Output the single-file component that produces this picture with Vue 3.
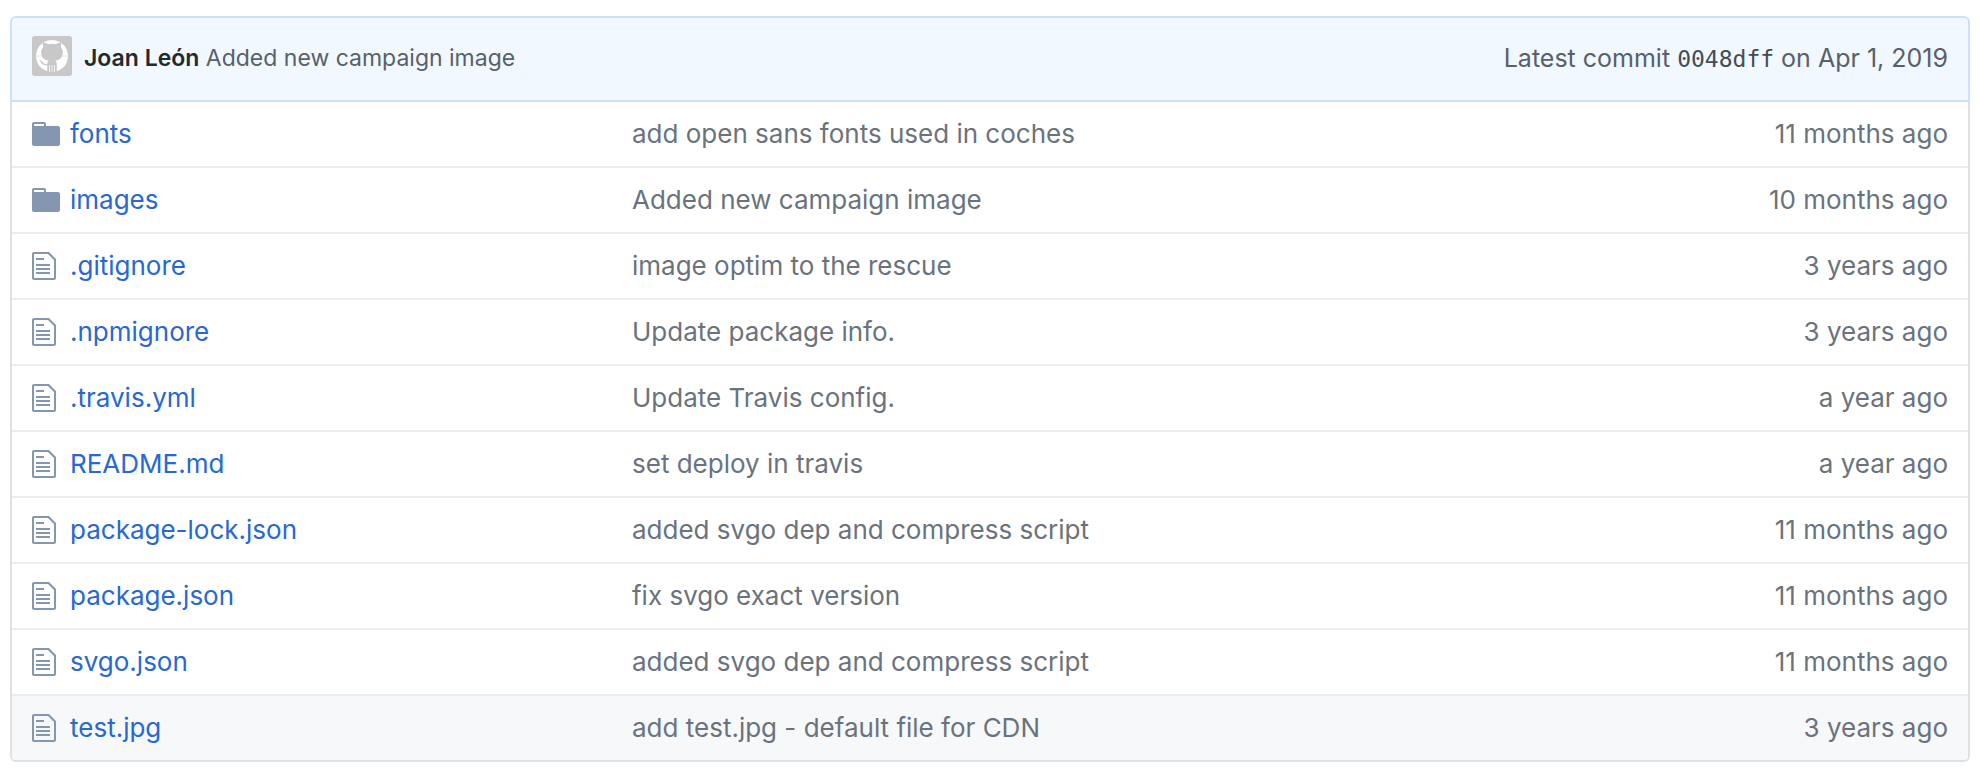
<script setup>
const files = [
  { type: 'dir', name: 'fonts', message: 'add open sans fonts used in coches', age: '11 months ago' },
  { type: 'dir', name: 'images', message: 'Added new campaign image', age: '10 months ago' },
  { type: 'file', name: '.gitignore', message: 'image optim to the rescue', age: '3 years ago' },
  { type: 'file', name: '.npmignore', message: 'Update package info.', age: '3 years ago' },
  { type: 'file', name: '.travis.yml', message: 'Update Travis config.', age: 'a year ago' },
  { type: 'file', name: 'README.md', message: 'set deploy in travis', age: 'a year ago' },
  { type: 'file', name: 'package-lock.json', message: 'added svgo dep and compress script', age: '11 months ago' },
  { type: 'file', name: 'package.json', message: 'fix svgo exact version', age: '11 months ago' },
  { type: 'file', name: 'svgo.json', message: 'added svgo dep and compress script', age: '11 months ago' },
  { type: 'file', name: 'test.jpg', message: 'add test.jpg - default file for CDN', age: '3 years ago', active: true },
]
</script>

<template>
  <main class="browser">
    <header class="commit">
      <svg class="avatar" viewBox="0 0 40 40" aria-hidden="true">
        <rect width="40" height="40" rx="3" fill="#c8c8c8" />
        <circle cx="20" cy="20" r="16" fill="#fff" />
        <g fill="#c8c8c8">
          <path d="M11.2 11c-.6-1.600-.5-3.500 0-4.600 1.900 0 3.600 1 5 1.900a15 15 0 0 1 7.600 0c1.400-.9 3.100-1.900 5-1.900.5 1.100.6 3 0 4.600 1.400 1.500 2 3.200 2 5.200 0 5.800-3.400 7.700-7.600 8.200 1.100 1 1.600 2.100 1.600 3.800V36.500h-9.600V28.200c0-1.700.5-2.800 1.600-3.800-4.200-.5-7.600-2.400-7.600-8.200 0-2 .6-3.700 2-5.200z" />
          <path d="M15.500 29.200c-3.400.6-5.300-.4-6.400-2.600-.6-1.200-1.200-1.800-2.100-2.400 2.200-.3 3.400 1.300 4.300 2.600 1 1.300 2.500 1.400 4.200.9z" />
        </g>
        <path stroke="#fff" stroke-width="1" opacity=".75" d="M17.500 29v7M20 29v7M22.500 29v7" />
        <path stroke="#c8c8c8" stroke-width="1" opacity=".5" fill="none" d="M4 20h6M30 20h6" />
      </svg>
      <p class="summary"><a class="author" href="#">Joan León</a> <a class="title" href="#">Added new campaign image</a></p>
      <p class="latest">Latest commit <a class="sha" href="#">0048dff</a> on <time datetime="2019-04-01">Apr 1, 2019</time></p>
    </header>
    <table class="files">
      <tbody>
        <tr v-for="file in files" :key="file.name" :class="{ active: file.active }">
          <td class="icon">
            <svg v-if="file.type === 'dir'" width="28" height="32" viewBox="0 0 14 16" aria-hidden="true">
              <path d="M13 4H7V3c0-.66-.31-1-1-1H1c-.55 0-1 .45-1 1v10c0 .55.45 1 1 1h12c.55 0 1-.45 1-1V5c0-.55-.45-1-1-1zM6 4H1V3h5v1z" />
            </svg>
            <svg v-else width="24" height="32" viewBox="0 0 12 16" aria-hidden="true">
              <path d="M6 5H2V4h4v1zM2 8h7V7H2v1zm0 2h7V9H2v1zm0 2h7v-1H2v1zm10-7.5V14c0 .55-.45 1-1 1H1c-.55 0-1-.45-1-1V2c0-.55.45-1 1-1h7.5L12 4.500zM11 5L8 2H1v12h10V5z" />
            </svg>
          </td>
          <td class="name"><a href="#">{{ file.name }}</a></td>
          <td class="message"><a href="#">{{ file.message }}</a></td>
          <td class="age"><time>{{ file.age }}</time></td>
        </tr>
      </tbody>
    </table>
  </main>
</template>

<style>
body {
  margin: 0;
  background: #fff;
}
</style>

<style scoped>
.browser {
  margin: 16px 10px 14px;
  font-family: Inter, "Liberation Sans", sans-serif;
  font-size: 26px;
  line-height: 32px;
  color: #6a737d;
}

a {
  color: inherit;
  text-decoration: none;
}

a:hover {
  text-decoration: underline;
}

.commit {
  display: flex;
  align-items: flex-start;
  padding: 18px 20px 20px;
  border: 2px solid #cce1fd;
  border-radius: 6px 6px 0 0;
  background: #f1f8ff;
  color: #586069;
  line-height: 44px;
}

.avatar {
  flex: none;
  width: 40px;
  height: 40px;
}

.summary {
  flex: 1;
  margin: 0 0 0 12px;
  font-size: 23px;
}

.author {
  font-weight: 600;
  color: #24292e;
}

.latest {
  margin: 0;
  font-size: 25px;
}

.sha {
  font-family: "DejaVu Sans Mono", "Liberation Mono", monospace;
  font-size: 23px;
  line-height: 1;
  color: #444d56;
}

.files {
  width: 100%;
  table-layout: fixed;
  border: solid #dfe2e5;
  border-width: 0 2px 2px;
  border-radius: 0 0 6px 6px;
  border-collapse: separate;
  border-spacing: 0;
  overflow: hidden;
}

td {
  padding: 16px 0;
  border-bottom: 2px solid #eaecef;
  white-space: nowrap;
}

tr:last-child td {
  border-bottom: 0;
}

.active {
  background: #f6f8fa;
}

.icon {
  width: 38px;
  padding-left: 20px;
}

.icon svg {
  display: block;
  fill: #8496b0;
}

.name {
  width: 562px;
  color: #2768d2;
}

.age {
  width: 320px;
  padding-right: 20px;
  text-align: right;
}
</style>
